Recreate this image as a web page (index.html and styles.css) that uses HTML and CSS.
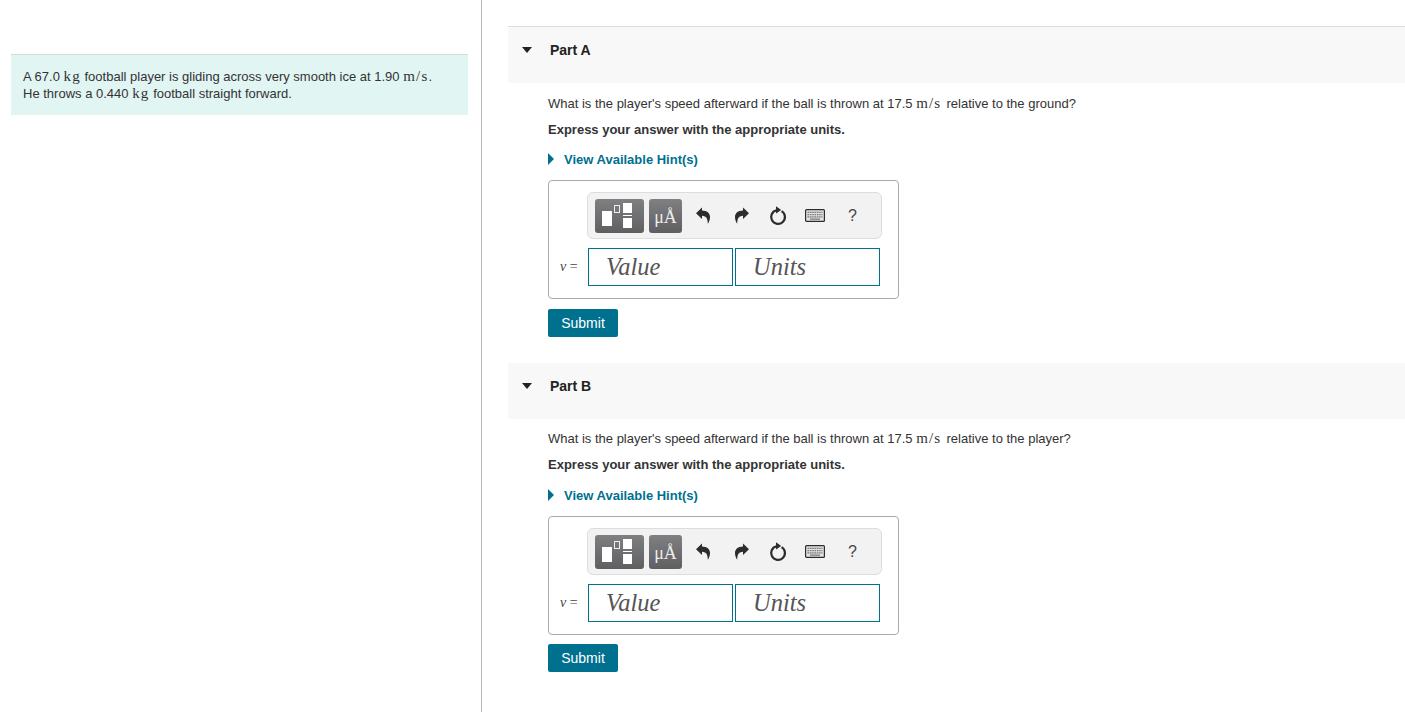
FILE: index.html
```html
<!DOCTYPE html>
<html lang="en">
<head>
    <meta charset="UTF-8">
    <meta name="viewport" content="width=device-width, initial-scale=1.0">
    <title>Football Player on Ice</title>
    <link rel="stylesheet" href="styles.css">
</head>
<body>
    <svg class="icon-defs" width="0" height="0">
        <symbol id="undo" viewBox="0 0 14 17">
            <path d="M6 0.5 L0 6.2 L6 12 L6 8.8 C10.6 8.8 11.8 12.4 11.8 16.8 C13 15.4 14 12.6 14 10 C14 6.4 11 3.6 6 3.6 Z"/>
        </symbol>
        <symbol id="redo" viewBox="0 0 14 17">
            <path d="M8 0.5 L14 6.2 L8 12 L8 8.8 C3.4 8.8 2.2 12.4 2.2 16.8 C1 15.4 0 12.6 0 10 C0 6.4 3 3.6 8 3.6 Z"/>
        </symbol>
        <symbol id="reset" viewBox="0 0 18 20">
            <path d="M12.6 5.1 A6.9 6.9 0 1 1 7.4 4.3" fill="none" stroke="currentColor" stroke-width="2.2"/>
            <path d="M7 0.3 L12.2 3.9 L7 7.6 Z"/>
        </symbol>
        <symbol id="keyboard" viewBox="0 0 20 13">
            <rect x="0.6" y="0.6" width="18.8" height="11.8" rx="1" fill="#e4e4e4" stroke="currentColor" stroke-width="1.2"/>
            <path d="M2.5 2.8h15v1.3h-15zM2.5 5h15v1.3h-15zM2.5 7.2h15v1.3h-15zM5 9.4h10v1.3h-10z" fill="#777"/>
            <path d="M4.6 2.8v5.7M6.9 2.8v5.7M9.2 2.8v5.7M11.5 2.8v5.7M13.8 2.8v5.7M16 2.8v5.7" stroke="#e4e4e4" stroke-width="0.7"/>
        </symbol>
    </svg>

    <div class="page">
        <aside class="left-col">
            <div class="stimulus">
                A 67.0 <span class="math no-gap">kg</span> football player is gliding across very smooth ice at 1.90 <span class="math no-gap">m/s</span>.<br>
                He throws a 0.440 <span class="math no-gap">kg</span> football straight forward.
            </div>
        </aside>

        <main class="right-col">
            <section class="part">
                <div class="part-head">
                    <span class="arrow-down"></span>
                    <h2>Part A</h2>
                </div>
                <div class="part-body">
                    <p class="question">What is the player's speed afterward if the ball is thrown at 17.5 <span class="math">m/s</span> relative to the ground?</p>
                    <p class="express">Express your answer with the appropriate units.</p>
                    <a class="hint" href="#"><span class="arrow-right"></span>View Available Hint(s)</a>
                    <div class="answer-box">
                        <div class="toolbar">
                            <span class="tool-btn tool-templates">
                                <span class="tpl-big"></span>
                                <span class="tpl-small"></span>
                                <span class="tpl-frac"><i></i><b></b><i></i></span>
                            </span>
                            <span class="tool-btn tool-units">μÅ</span>
                            <svg class="tool-icon undo"><use href="#undo"/></svg>
                            <svg class="tool-icon redo"><use href="#redo"/></svg>
                            <svg class="tool-icon reset"><use href="#reset"/></svg>
                            <svg class="tool-icon keyboard"><use href="#keyboard"/></svg>
                            <span class="tool-help">?</span>
                        </div>
                        <div class="input-row">
                            <span class="var-label"><i>v</i> =</span>
                            <div class="field">Value</div>
                            <div class="field">Units</div>
                        </div>
                    </div>
                    <button class="submit">Submit</button>
                </div>
            </section>

            <section class="part">
                <div class="part-head">
                    <span class="arrow-down"></span>
                    <h2>Part B</h2>
                </div>
                <div class="part-body">
                    <p class="question">What is the player's speed afterward if the ball is thrown at 17.5 <span class="math">m/s</span> relative to the player?</p>
                    <p class="express">Express your answer with the appropriate units.</p>
                    <a class="hint" href="#"><span class="arrow-right"></span>View Available Hint(s)</a>
                    <div class="answer-box">
                        <div class="toolbar">
                            <span class="tool-btn tool-templates">
                                <span class="tpl-big"></span>
                                <span class="tpl-small"></span>
                                <span class="tpl-frac"><i></i><b></b><i></i></span>
                            </span>
                            <span class="tool-btn tool-units">μÅ</span>
                            <svg class="tool-icon undo"><use href="#undo"/></svg>
                            <svg class="tool-icon redo"><use href="#redo"/></svg>
                            <svg class="tool-icon reset"><use href="#reset"/></svg>
                            <svg class="tool-icon keyboard"><use href="#keyboard"/></svg>
                            <span class="tool-help">?</span>
                        </div>
                        <div class="input-row">
                            <span class="var-label"><i>v</i> =</span>
                            <div class="field">Value</div>
                            <div class="field">Units</div>
                        </div>
                    </div>
                    <button class="submit">Submit</button>
                </div>
            </section>
        </main>
    </div>
</body>
</html>
```

FILE: styles.css
```css
html, body {
    margin: 0;
    padding: 0;
    height: 100%;
    overflow: hidden;
}
body {
    background: #fff;
    color: #333;
    font-family: "Liberation Sans", Arial, sans-serif;
    font-size: 13px;
}
.icon-defs {
    position: absolute;
}
.page {
    display: flex;
    height: 712px;
}
.left-col {
    width: 482px;
    height: 100%;
    box-sizing: border-box;
    border-right: 1px solid #b5b5b5;
    padding: 54px 13px 0 11px;
    flex-shrink: 0;
}
.stimulus {
    height: 47px;
    padding: 13px 12px 0;
    background: #e1f5f3;
    border-top: 1px solid #cfdedc;
    line-height: 17px;
    color: #333;
}
.math {
    margin-right: 1.5px;
    font-family: "Liberation Serif", serif;
    font-size: 15px;
    line-height: 0;
    letter-spacing: 1.2px;
}
.math.no-gap {
    margin-right: 0;
}
.right-col {
    flex: 1;
    padding: 26px 0 0 26px;
}
.part {
    margin-bottom: 26px;
}
.part-head {
    display: flex;
    align-items: flex-start;
    height: 56px;
    background: #f8f8f8;
    border-top: 1px solid #ddd;
}
.part + .part .part-head {
    border-top: none;
}
.part-head h2 {
    margin: 15px 0 0 18px;
    font-size: 14px;
    line-height: 16px;
    font-weight: bold;
    color: #222;
}
.arrow-down {
    width: 0;
    height: 0;
    margin: 20px 0 0 14px;
    border-left: 5.5px solid transparent;
    border-right: 5.5px solid transparent;
    border-top: 6px solid #222;
}
.part-body {
    padding: 0 0 0 40px;
}
.question {
    margin: 0;
    padding-top: 12px;
    line-height: 18px;
}
.part + .part .question {
    padding-top: 11px;
}
.express {
    margin: 8px 0 0;
    font-weight: bold;
    line-height: 18px;
}
.hint {
    display: flex;
    align-items: center;
    margin-top: 11px;
    height: 18px;
    color: #00708f;
    font-weight: bold;
    text-decoration: none;
}
.part + .part .hint {
    margin-top: 12px;
}
.arrow-right {
    width: 0;
    height: 0;
    margin-right: 10px;
    border-top: 6px solid transparent;
    border-bottom: 6px solid transparent;
    border-left: 6px solid #00708f;
}
.answer-box {
    width: 351px;
    height: 119px;
    margin-top: 12px;
    box-sizing: border-box;
    border: 1px solid #aaa;
    border-radius: 4px;
    padding: 11px 16px 0 12px;
}
.toolbar {
    display: flex;
    align-items: center;
    width: 295px;
    height: 47px;
    margin-left: 26px;
    box-sizing: border-box;
    background: #f2f2f2;
    border: 1px solid #ddd;
    border-radius: 6px;
    padding-left: 7px;
}
.tool-btn {
    display: block;
    height: 34px;
    box-sizing: border-box;
    border-radius: 3px;
    background: linear-gradient(#807f81, #5f5e60);
    color: #eee;
}
.tool-templates {
    position: relative;
    width: 49px;
}
.tpl-big {
    position: absolute;
    left: 7px;
    top: 12px;
    width: 10px;
    height: 15px;
    background: #fff;
}
.tpl-small {
    position: absolute;
    left: 19px;
    top: 6px;
    width: 6px;
    height: 8px;
    border: 1px solid #eee;
    box-sizing: border-box;
}
.tpl-frac {
    position: absolute;
    left: 28px;
    top: 4px;
    width: 9px;
}
.tpl-frac i {
    display: block;
    width: 9px;
    height: 10px;
    background: #fff;
}
.tpl-frac b {
    display: block;
    width: 9px;
    height: 1px;
    background: #fff;
    margin: 2px 0;
}
.tool-units {
    width: 33px;
    margin-left: 5px;
    font-family: "Liberation Serif", serif;
    font-size: 18px;
    line-height: 36px;
    text-align: center;
}
.tool-icon {
    display: block;
    color: #2c2c2c;
    fill: #2c2c2c;
}
.undo {
    width: 14px;
    height: 17px;
    margin-left: 14px;
}
.redo {
    width: 14px;
    height: 17px;
    margin-left: 25px;
}
.reset {
    width: 18px;
    height: 20px;
    margin-left: 20px;
}
.keyboard {
    width: 20px;
    height: 13px;
    margin-left: 18px;
}
.tool-help {
    margin-left: 23px;
    font-size: 16px;
    color: #444;
}
.input-row {
    display: flex;
    align-items: center;
    margin-top: 9px;
}
.var-label {
    width: 28px;
    margin-left: -1px;
    flex-shrink: 0;
    font-family: "Liberation Serif", serif;
    font-size: 14px;
    color: #444;
}
.field {
    width: 145px;
    height: 38px;
    margin-right: 2px;
    box-sizing: border-box;
    border: 1px solid #00708f;
    padding-left: 17px;
    font-family: "Liberation Serif", serif;
    font-style: italic;
    font-size: 24.5px;
    line-height: 35px;
    color: #555;
}
.submit {
    display: block;
    width: 70px;
    height: 28px;
    margin-top: 10px;
    padding: 0;
    border: none;
    border-radius: 2px;
    background: #00708f;
    color: #fff;
    font-family: "Liberation Sans", Arial, sans-serif;
    font-size: 14px;
}
.part + .part .submit {
    margin-top: 9px;
}
```
